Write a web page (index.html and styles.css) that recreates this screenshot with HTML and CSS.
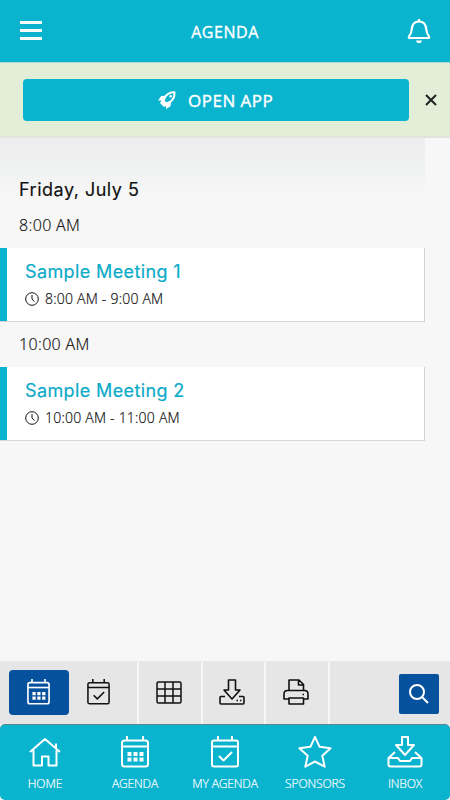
FILE: index.html
```html
<!DOCTYPE html>
<html lang="en">
<head>
<meta charset="utf-8">
<title>Agenda</title>
<link rel="stylesheet" href="styles.css">
</head>
<body>
<svg width="0" height="0" class="defs">
  <symbol id="calendar" viewBox="0 0 28 32">
    <path d="M6 0v5M22 0v5"/><rect x="1" y="4.500" width="26" height="26" rx="2.500"/><path d="M1 10.500h26"/>
    <path class="solid" d="M6.500 16h4v4h-4zM12.500 16h4v4h-4zM18.500 16h4v4h-4zM6.500 21.500h4v4h-4zM12.500 21.500h4v4h-4zM18.500 21.500h4v4h-4z"/>
  </symbol>
  <symbol id="calendar-check" viewBox="0 0 28 32">
    <path d="M7 0v5M21 0v5"/><rect x="1" y="4.500" width="26" height="26" rx="2"/><path d="M1 10.500h26M8 20l4.500 4.500 8.500-8.500"/>
  </symbol>
  <symbol id="clock" viewBox="0 0 14 14"><circle cx="7" cy="7" r="6.300"/><path d="M7 3v4l2.500 2.700"/></symbol>
</svg>
<div class="app">
  <header class="header">
    <svg class="menu" viewBox="0 0 22 20"><path d="M0 1.500h22M0 9.500h22M0 17.500h22"/></svg>
    <h1>AGENDA</h1>
    <svg class="bell" viewBox="0 0 22 26"><path d="M11 1v3M1.500 20h19c1 0 .8-1.300 0-2.500-1.700-1.700-2-4-2.200-6C18 6.500 15.500 3.500 11 3.500S4 6.500 3.700 11.500c-.2 2-.5 4.300-2.200 6-.8 1.200-1 2.500 0 2.500z"/><path class="solid" d="M8 22.500h6c-.4 1.800-1.500 2.700-3 2.700s-2.600-.9-3-2.700z"/></svg>
  </header>
  <section class="banner">
    <button class="open">
      <svg class="rocket" viewBox="0 0 18 18"><path d="M16.500 1.200c-4.700-.2-7.500 1.500-9.500 5L5.500 10l2.700 2.700 3.600-1.700c3.600-2.200 5-5.300 4.700-9.800z"/><circle class="solid" cx="12.700" cy="5.200" r="1.300"/><path class="solid" d="M7 4.800L3.200 5 0 9.500h3.500L2 12l4 4 2-1v3l4.300-2.500 1-5-4.800 2.500-3.500-3.500z"/></svg>
      <span>OPEN APP</span>
    </button>
    <svg class="close" viewBox="0 0 10 10"><path d="M0 0l10 10M10 0L0 10"/></svg>
  </section>
  <main class="content">
    <h2 class="day">Friday, July 5</h2>
    <div class="slot">8:00 AM</div>
    <article class="card">
      <h3>Sample Meeting 1</h3>
      <p><svg class="clock"><use href="#clock"/></svg><span>8:00 AM - 9:00 AM</span></p>
    </article>
    <div class="slot">10:00 AM</div>
    <article class="card">
      <h3>Sample Meeting 2</h3>
      <p><svg class="clock"><use href="#clock"/></svg><span>10:00 AM - 11:00 AM</span></p>
    </article>
  </main>
  <div class="toolbar">
    <div class="views">
      <span class="active"><svg class="cal"><use href="#calendar"/></svg></span>
      <svg class="cal dark"><use href="#calendar-check"/></svg>
    </div>
    <div class="tool"><svg class="grid" viewBox="0 0 26 23"><rect x="1" y="1" width="24" height="21" rx="1.500"/><path d="M1 8h24M1 15h24M9 1v21M17 1v21"/></svg></div>
    <div class="tool"><svg class="download" viewBox="0 0 26 26"><path d="M6 17.500H2q-1 0-1 1V24q0 1 1 1h22q1 0 1-1v-5.500q0-1-1-1h-4M9.500 1h7v10H21l-8 9-8-9h4.500zM17.500 21.500h1.500M21 21.500h1.500"/></svg></div>
    <div class="tool"><svg class="print" viewBox="0 0 26 26"><path d="M6 11.500V1h10l4.500 4.500v6M15.500 1v5h5M6 20H1v-5q0-3.500 3.500-3.500h17q3.500 0 3.500 3.500v5h-4.500M6 19h14.500v6H6zM19.500 15.500H21"/></svg></div>
    <button class="search"><svg viewBox="0 0 20 20"><circle cx="8" cy="8" r="7"/><path d="M13 13l6 6"/></svg></button>
  </div>
  <nav class="nav">
    <a><svg class="home" viewBox="0 0 32 32"><path d="M1 16L16 3l15 13M27 12.500V7.500M4.500 14v15.500h8.500v-9h6.500v9h8V14"/></svg><span>HOME</span></a>
    <a><svg><use href="#calendar"/></svg><span>AGENDA</span></a>
    <a><svg><use href="#calendar-check"/></svg><span>MY AGENDA</span></a>
    <a><svg class="star" viewBox="0 0 34 32"><path d="M17 .8l4.600 10 11 1.400-8.300 7.500 2.400 11L17 25.500l-9.700 5.200 2.400-11-8.300-7.500 11-1.400z"/></svg><span>SPONSORS</span></a>
    <a><svg class="inbox" viewBox="0 0 36 32"><path d="M15 1h6v8h6l-9 10L9 9h6zM8 16l-6.500 6v6.500q0 2 2 2h29q2 0 2-2V22L28 16M1.500 22h9.500l2 3h10l2-3h9.500"/></svg><span>INBOX</span></a>
  </nav>
</div>
</body>
</html>
```
FILE: styles.css
```css
* { box-sizing: border-box; }
body { margin: 0; background: #f7f7f7; font-family: "Open Sans", sans-serif; color: #111; }
h1, h2, h3, p { margin: 0; font-weight: 400; }
button { border: 0; padding: 0; font: inherit; color: inherit; }
svg { display: block; fill: none; stroke: currentColor; stroke-width: 2; stroke-linejoin: round; overflow: visible; }
.defs { display: none; }
.solid { fill: currentColor; stroke: none; }
.app { width: 450px; height: 800px; display: flex; flex-direction: column; overflow: hidden; }

.header { height: 62px; flex: none; background: #0ab3ce; color: #fff; display: flex; justify-content: space-between; align-items: center; padding: 0 20px; }
.menu { width: 22px; height: 20px; stroke-width: 2.800; }
.header h1 { font-size: 16px; letter-spacing: .55px; line-height: 24px; padding-top: 1px; -webkit-text-stroke: .35px; }
.bell { width: 22px; height: 26px; stroke-width: 2.200; }

.banner { height: 76px; flex: none; background: #e2eed7; border-top: 1px solid #b4dad2; border-bottom: 2px solid #dfe5dc; display: flex; align-items: center; padding: 1px 14px 0 23px; }
.open { width: 386px; height: 42px; border-radius: 4px; background: #0ab3ce; color: #fff; display: flex; align-items: center; gap: 12px; padding-left: 135px; font-size: 17px; letter-spacing: .5px; -webkit-text-stroke: .4px; }
.rocket { width: 18px; height: 18px; }
.open .rocket { margin-top: -1px; }
.close { width: 10px; height: 10px; margin-left: 17px; color: #222; stroke-width: 2; }

.content { width: 425px; flex: 1; background: linear-gradient(#ededed, #f0f1f1 30px, #f7f7f7 60px); padding-top: 38px; }
.day { height: 28px; padding-left: 19px; font: 400 18px/28px Inter, sans-serif; letter-spacing: .5px; -webkit-text-stroke: .15px; }
.slot { height: 44px; padding-left: 19px; font-size: 16px; line-height: 42px; font-weight: 300; letter-spacing: .35px; -webkit-text-stroke: .2px; }
.card { height: 74px; margin-bottom: 1px; background: #fff; border-right: 1px solid #d2d2d2; border-bottom: 1px solid #d6d6d6; padding: 10px 0 0 25px; box-shadow: inset 7px 0 #0ab3ce; }
.card h3 { height: 27px; color: #0aabc8; font: 400 18px/27px Inter, sans-serif; letter-spacing: .38px; -webkit-text-stroke: .2px; }
.card p { height: 26px; display: flex; align-items: center; gap: 6px; font-size: 14px; line-height: 26px; font-weight: 300; padding-top: 2px; letter-spacing: .22px; -webkit-text-stroke: .2px; }
.clock { width: 14px; height: 14px; stroke-width: 1; }

.toolbar { height: 63px; flex: none; display: flex; background: #e6e6e6; border-top: 1px solid #e9e9e9; padding-right: 11px; }
.views { width: 139px; display: flex; align-items: center; padding: 0 0 2px 9px; gap: 18px; border-right: 2px solid #f7f7f7; }
.active { width: 60px; height: 45px; border-radius: 4px; background: #06519d; color: #fff; display: grid; place-items: center; padding-right: 1px; }
.cal { width: 23px; height: 26px; }
.dark { stroke-width: 1.900; }
.tool { width: 63.500px; display: grid; place-items: center; border-right: 2px solid #f7f7f7; padding: 0 2px 2px 0; }
.grid { width: 26px; height: 23px; stroke-width: 1.500; }
.download, .print { width: 26px; height: 26px; stroke-width: 1.600; }
.search { width: 40px; height: 40px; margin: 12px 0 0 auto; border-radius: 2px; background: #06519d; color: #fff; display: grid; place-items: center; }
.search svg { width: 20px; height: 20px; }

.nav { height: 76px; flex: none; background: #0ab3ce; border-top: 1px solid #5e858c; border-radius: 5px; color: #fff; display: grid; grid-template-columns: repeat(5, 90px); }
.nav a { display: flex; flex-direction: column; align-items: center; padding-top: 11px; gap: 7px; }
.nav svg { width: 28px; height: 32px; stroke-width: 2; }
.nav .home { width: 32px; }
.nav .star { width: 34px; }
.nav .inbox { width: 36px; }
.nav span { font-size: 12px; line-height: 18px; font-weight: 300; letter-spacing: -.12px; -webkit-text-stroke: .2px; }
```
